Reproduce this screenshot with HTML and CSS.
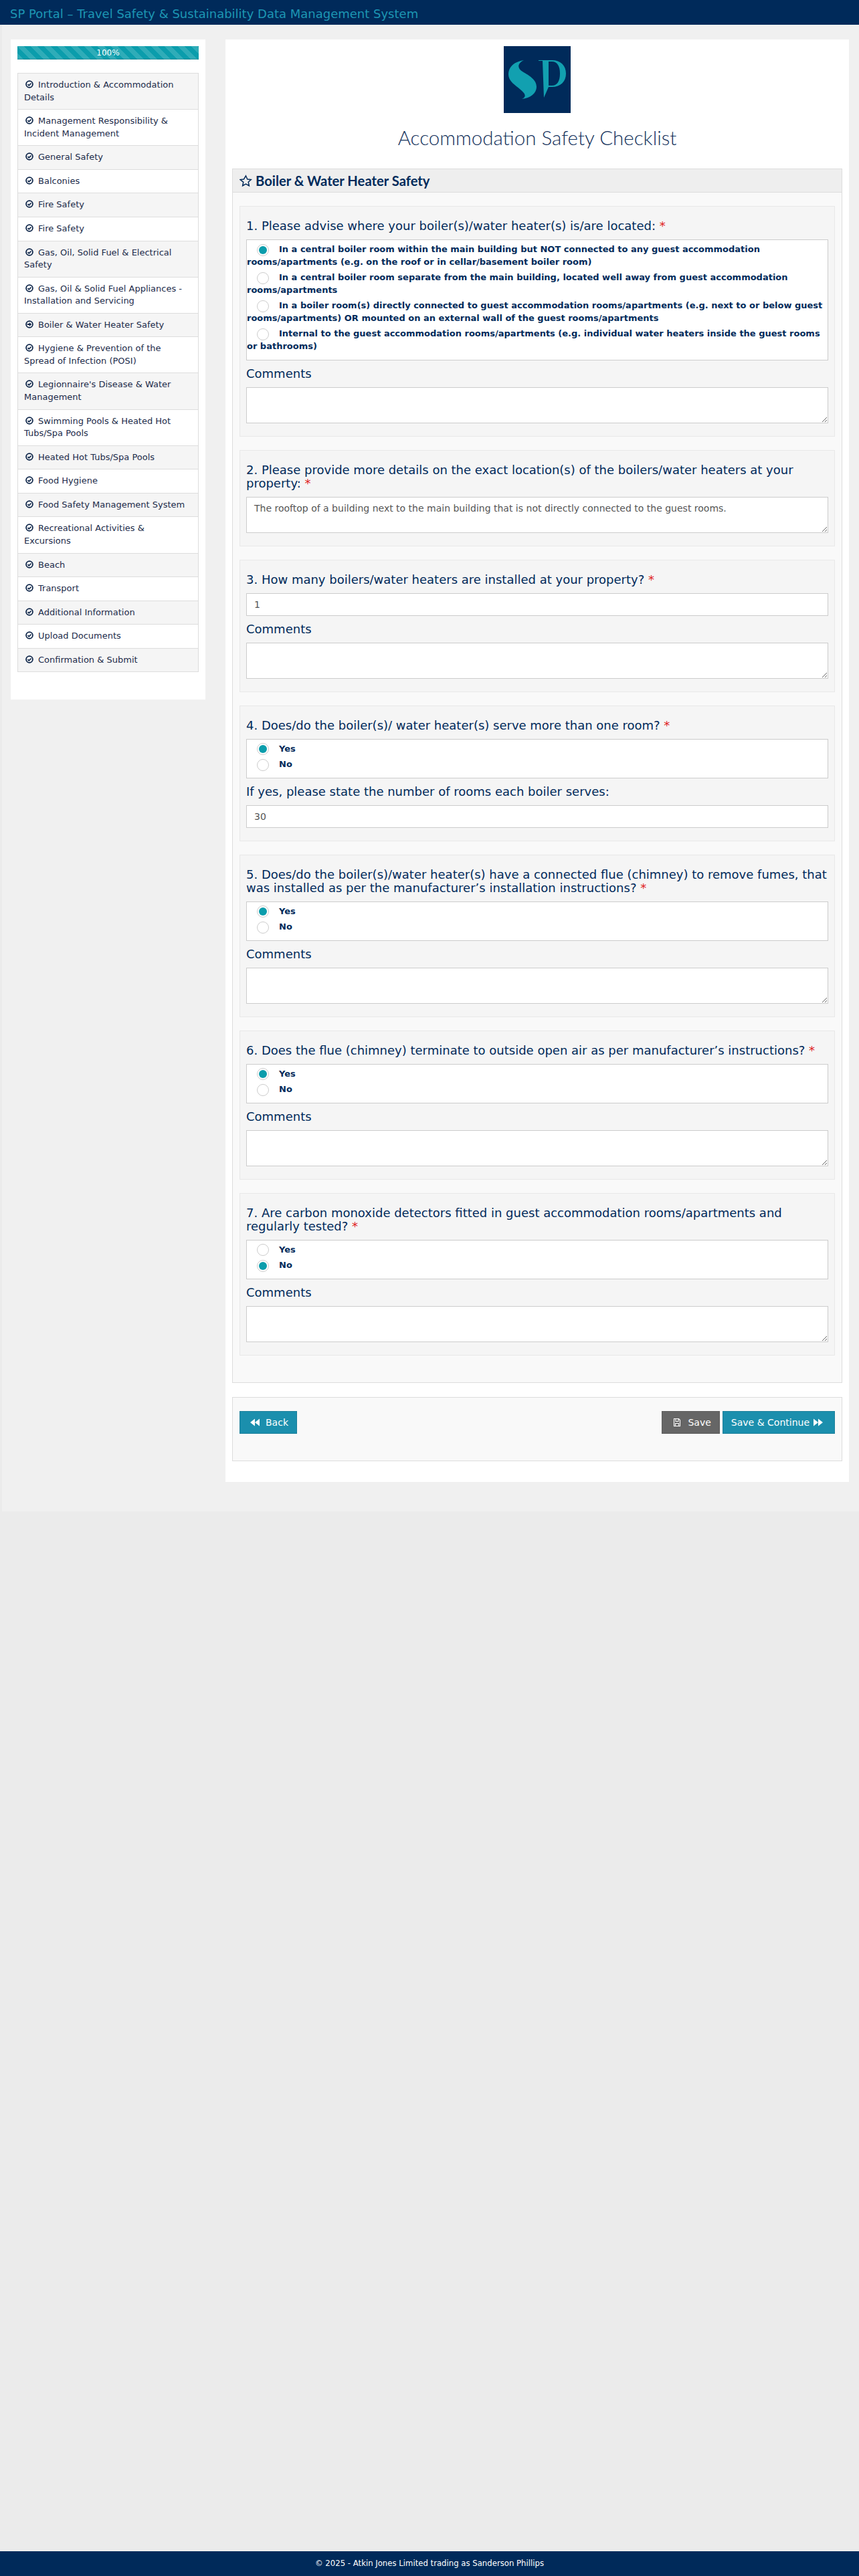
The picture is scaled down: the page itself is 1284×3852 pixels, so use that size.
FILE: index.html
```html
<!DOCTYPE html>
<html lang="en">
<head>
    <meta charset="UTF-8">
    <meta name="viewport" content="width=device-width, initial-scale=1.0">
    <title>Accommodation Safety Checklist</title>
    <link rel="stylesheet" href="styles.css">
</head>
<body>
    <svg class="sprites" aria-hidden="true">
        <symbol id="done" viewBox="0 0 12 12">
            <circle cx="6" cy="6" r="4.9" fill="none" stroke="currentColor" stroke-width="1.8"/>
            <path d="M3.5 6.1 5.3 7.9 8.6 4.5" fill="none" stroke="currentColor" stroke-width="1.6"/>
        </symbol>
        <symbol id="current" viewBox="0 0 12 12">
            <circle cx="6" cy="6" r="4.9" fill="none" stroke="currentColor" stroke-width="1.8"/>
            <path d="M2.8 5h3V3l3.4 3-3.4 3V7h-3z" fill="currentColor"/>
        </symbol>
    </svg>

    <nav class="navbar">SP Portal – Travel Safety &amp; Sustainability Data Management System</nav>

    <div class="wrapper">
        <aside class="sidebar">
            <div class="progress">100%</div>
            <ul class="steps">
                <li><svg class="step-icon"><use href="#done"/></svg>Introduction &amp; Accommodation Details</li>
                <li><svg class="step-icon"><use href="#done"/></svg>Management Responsibility &amp; Incident Management</li>
                <li><svg class="step-icon"><use href="#done"/></svg>General Safety</li>
                <li><svg class="step-icon"><use href="#done"/></svg>Balconies</li>
                <li><svg class="step-icon"><use href="#done"/></svg>Fire Safety</li>
                <li><svg class="step-icon"><use href="#done"/></svg>Fire Safety</li>
                <li><svg class="step-icon"><use href="#done"/></svg>Gas, Oil, Solid Fuel &amp; Electrical Safety</li>
                <li><svg class="step-icon"><use href="#done"/></svg>Gas, Oil &amp; Solid Fuel Appliances - Installation and Servicing</li>
                <li><svg class="step-icon"><use href="#current"/></svg>Boiler &amp; Water Heater Safety</li>
                <li><svg class="step-icon"><use href="#done"/></svg>Hygiene &amp; Prevention of the Spread of Infection (POSI)</li>
                <li><svg class="step-icon"><use href="#done"/></svg>Legionnaire's Disease &amp; Water Management</li>
                <li><svg class="step-icon"><use href="#done"/></svg>Swimming Pools &amp; Heated Hot Tubs/Spa Pools</li>
                <li><svg class="step-icon"><use href="#done"/></svg>Heated Hot Tubs/Spa Pools</li>
                <li><svg class="step-icon"><use href="#done"/></svg>Food Hygiene</li>
                <li><svg class="step-icon"><use href="#done"/></svg>Food Safety Management System</li>
                <li><svg class="step-icon"><use href="#done"/></svg>Recreational Activities &amp; Excursions</li>
                <li><svg class="step-icon"><use href="#done"/></svg>Beach</li>
                <li><svg class="step-icon"><use href="#done"/></svg>Transport</li>
                <li><svg class="step-icon"><use href="#done"/></svg>Additional Information</li>
                <li><svg class="step-icon"><use href="#done"/></svg>Upload Documents</li>
                <li><svg class="step-icon"><use href="#done"/></svg>Confirmation &amp; Submit</li>
            </ul>
        </aside>

        <main class="content">
            <svg class="logo" viewBox="0 0 100 100" role="img" aria-label="SP logo">
                <rect width="100" height="100" fill="#002a5a"/>
                <path fill="#12a0b0" d="M30 21C16 23 7 31 7 42c0 13 15 18 23 28 3 4 2 7-3 9 13-1 22-9 22-18 0-11-11-17-21-23-8-5-8-12 2-17z"/>
                <path fill="#12a0b0" fill-rule="evenodd" d="M52 21h20c13 0 21 8 21 20s-8 20-21 20h-5l-7 16-2-55h-6zm15 2v36h5c8 0 12-7 12-18s-4-18-12-18z"/>
            </svg>
            <h1 class="page-title">Accommodation Safety Checklist</h1>

            <section class="panel">
                <h2 class="panel-heading">
                    <svg class="star" viewBox="0 0 24 24"><path d="M12 2.500l2.900 6.300 6.900.8-5.100 4.700 1.400 6.800-6.100-3.400-6.100 3.400 1.400-6.800L1.300 9.600l6.900-.8z" fill="none" stroke="currentColor" stroke-width="1.900"/></svg>
                    Boiler &amp; Water Heater Safety
                </h2>
                <div class="panel-body">

                    <div class="question">
                        <h4>1. Please advise where your boiler(s)/water heater(s) is/are located: <span class="required">*</span></h4>
                        <div class="radio-box">
                            <label class="radio-row"><input type="radio" name="q1" checked>In a central boiler room within the main building but NOT connected to any guest accommodation rooms/apartments (e.g. on the roof or in cellar/basement boiler room)</label>
                            <label class="radio-row"><input type="radio" name="q1">In a central boiler room separate from the main building, located well away from guest accommodation rooms/apartments</label>
                            <label class="radio-row"><input type="radio" name="q1">In a boiler room(s) directly connected to guest accommodation rooms/apartments (e.g. next to or below guest rooms/apartments) OR mounted on an external wall of the guest rooms/apartments</label>
                            <label class="radio-row"><input type="radio" name="q1">Internal to the guest accommodation rooms/apartments (e.g. individual water heaters inside the guest rooms or bathrooms)</label>
                        </div>
                        <h4>Comments</h4>
                        <textarea class="field"></textarea>
                    </div>

                    <div class="question">
                        <h4>2. Please provide more details on the exact location(s) of the boilers/water heaters at your property: <span class="required">*</span></h4>
                        <textarea class="field">The rooftop of a building next to the main building that is not directly connected to the guest rooms.</textarea>
                    </div>

                    <div class="question">
                        <h4>3. How many boilers/water heaters are installed at your property? <span class="required">*</span></h4>
                        <input class="field" type="text" value="1">
                        <h4>Comments</h4>
                        <textarea class="field"></textarea>
                    </div>

                    <div class="question">
                        <h4>4. Does/do the boiler(s)/ water heater(s) serve more than one room? <span class="required">*</span></h4>
                        <div class="radio-box">
                            <label class="radio-row"><input type="radio" name="q4" checked>Yes</label>
                            <label class="radio-row"><input type="radio" name="q4">No</label>
                        </div>
                        <h4>If yes, please state the number of rooms each boiler serves:</h4>
                        <input class="field" type="text" value="30">
                    </div>

                    <div class="question">
                        <h4>5. Does/do the boiler(s)/water heater(s) have a connected flue (chimney) to remove fumes, that was installed as per the manufacturer’s installation instructions? <span class="required">*</span></h4>
                        <div class="radio-box">
                            <label class="radio-row"><input type="radio" name="q5" checked>Yes</label>
                            <label class="radio-row"><input type="radio" name="q5">No</label>
                        </div>
                        <h4>Comments</h4>
                        <textarea class="field"></textarea>
                    </div>

                    <div class="question">
                        <h4>6. Does the flue (chimney) terminate to outside open air as per manufacturer’s instructions? <span class="required">*</span></h4>
                        <div class="radio-box">
                            <label class="radio-row"><input type="radio" name="q6" checked>Yes</label>
                            <label class="radio-row"><input type="radio" name="q6">No</label>
                        </div>
                        <h4>Comments</h4>
                        <textarea class="field"></textarea>
                    </div>

                    <div class="question">
                        <h4>7. Are carbon monoxide detectors fitted in guest accommodation rooms/apartments and regularly tested? <span class="required">*</span></h4>
                        <div class="radio-box">
                            <label class="radio-row"><input type="radio" name="q7">Yes</label>
                            <label class="radio-row"><input type="radio" name="q7" checked>No</label>
                        </div>
                        <h4>Comments</h4>
                        <textarea class="field"></textarea>
                    </div>

                </div>
            </section>

            <div class="actions">
                <button class="btn btn-teal" type="button">
                    <svg class="btn-icon" viewBox="0 0 14 14"><path d="M7 1.500v11L0 7zM14 1.500v11L7 7z" fill="currentColor"/></svg>
                    Back
                </button>
                <div class="actions-right">
                    <button class="btn btn-grey" type="button">
                        <svg class="btn-icon" viewBox="0 0 14 14"><path d="M2.500 1.500h7l2 2v9h-9z M5 1.500v4h4v-4 M4.500 12.500v-4h5v4" fill="none" stroke="currentColor" stroke-width="1.100"/></svg>
                        Save
                    </button>
                    <button class="btn btn-teal btn-next" type="button">
                        Save &amp; Continue
                        <svg class="btn-icon" viewBox="0 0 14 14"><path d="M0 1.500v11L7 7zM7 1.500v11L14 7z" fill="currentColor"/></svg>
                    </button>
                </div>
            </div>
        </main>
    </div>

    <footer class="footer">© 2025 - Atkin Jones Limited trading as Sanderson Phillips</footer>
</body>
</html>
```

FILE: styles.css
```css
* {
    box-sizing: border-box;
}

body {
    margin: 0;
    min-height: 100vh;
    display: flex;
    flex-direction: column;
    background-color: #ebebeb;
    font-family: "DejaVu Sans", sans-serif;
    font-size: 13px;
    line-height: 18.57px;
    color: #002a5a;
}

.sprites {
    display: none;
}

.navbar {
    height: 37px;
    padding: 0 15px;
    background-color: #002a5a;
    color: #1d96b3;
    font-size: 18px;
    line-height: 41px;
}

.wrapper {
    display: flex;
    align-items: flex-start;
    gap: 30px;
    padding: 22px 15px 44px 13px;
    background-color: #f0f0f0;
    border-left: 3px solid #ebebeb;
}

/* left column */
.sidebar {
    flex: 0 0 291px;
    padding: 10px 10px 41px;
    background-color: white;
}

.progress {
    height: 20px;
    background-color: #0b9dac;
    background-image: linear-gradient(45deg, rgba(255, 255, 255, 0.15) 25%, transparent 25%, transparent 50%, rgba(255, 255, 255, 0.15) 50%, rgba(255, 255, 255, 0.15) 75%, transparent 75%, transparent);
    background-size: 20px 20px;
    box-shadow: inset 0 -1px 0 rgba(0, 0, 0, 0.15);
    color: white;
    font-size: 12px;
    line-height: 20px;
    text-align: center;
}

.steps {
    list-style: none;
    margin: 20px 0 0;
    padding: 0;
}

.steps li {
    padding: 8px 9px;
    border: 1px solid #ddd;
    background-color: white;
    color: #1c2b4a;
}

.steps li + li {
    border-top: none;
}

.steps li:nth-child(odd) {
    background-color: #f5f5f5;
}

.step-icon {
    width: 12px;
    height: 12px;
    margin: 0 7px 0 2px;
    vertical-align: -1px;
    color: #0b2347;
}

/* right column */
.content {
    flex: 0 0 932px;
    padding: 10px 10px 31px;
    background-color: white;
    text-align: center;
}

.logo {
    display: block;
    width: 100px;
    height: 100px;
    margin: 0 auto;
}

.page-title {
    margin: 17px 0 26px;
    font-family: Lato, sans-serif;
    font-size: 29.5px;
    font-weight: 300;
    line-height: 40px;
    color: #12305a;
}

.panel {
    border: 1px solid #ddd;
    background-color: #f9f9f9;
    text-align: left;
}

.panel-heading {
    height: 35px;
    margin: 0;
    padding: 0 10px;
    display: flex;
    align-items: center;
    gap: 5px;
    background-color: #eee;
    border-bottom: 1px solid #ddd;
    font-family: Lato, sans-serif;
    font-size: 20.2px;
    font-weight: 700;
}

.star {
    width: 19px;
    height: 19px;
}

.panel-body {
    padding: 20px 10px;
}

.question {
    margin-bottom: 20px;
    padding: 9px 9px 19px;
    border: 1px solid #e8e8e8;
    background-color: #f5f5f5;
}

.question h4 {
    margin: 10px 0;
    font-size: 18px;
    font-weight: 400;
    line-height: 20px;
}

.required {
    color: #e02020;
}

.radio-box {
    padding: 5px 0;
    border: 1px solid #ccc;
    background-color: white;
}

.radio-row {
    display: block;
    margin-bottom: 5px;
    font-weight: 700;
}

.radio-row input {
    appearance: none;
    width: 18px;
    height: 18px;
    margin: -4px 15px -4px 15px;
    padding: 2px;
    border: 1px solid #ccc;
    border-radius: 50%;
    background-clip: content-box;
    vertical-align: middle;
}

.radio-row input:checked {
    background-color: #0b9dac;
}

.field {
    display: block;
    width: 100%;
    padding: 6px 11px;
    border: 1px solid #ccc;
    background-color: white;
    color: #555;
    font-family: "DejaVu Sans", sans-serif;
    font-size: 14px;
    line-height: 20px;
}

input.field {
    height: 34px;
}

textarea.field {
    height: 54px;
    resize: vertical;
}

.actions {
    display: flex;
    justify-content: space-between;
    margin-top: 21px;
    padding: 20px 10px 40px;
    border: 1px solid #ddd;
    background-color: #f9f9f9;
}

.actions-right {
    display: flex;
    gap: 4px;
}

.btn {
    height: 34px;
    padding: 0 12px 0 15px;
    display: inline-flex;
    align-items: center;
    gap: 9px;
    border: 1px solid transparent;
    color: white;
    font-family: "DejaVu Sans", sans-serif;
    font-size: 14px;
}

.btn-next {
    padding: 0 17px 0 12px;
    gap: 6px;
}

.btn-teal {
    background-color: #1b8fad;
    border-color: #1b7f9a;
}

.btn-grey {
    background-color: #666;
    border-color: #5c5c5c;
}

.btn-icon {
    width: 14px;
    height: 14px;
}

.footer {
    height: 37px;
    margin-top: auto;
    background-color: #002a5a;
    color: white;
    font-size: 11.7px;
    line-height: 37px;
    text-align: center;
}
```
